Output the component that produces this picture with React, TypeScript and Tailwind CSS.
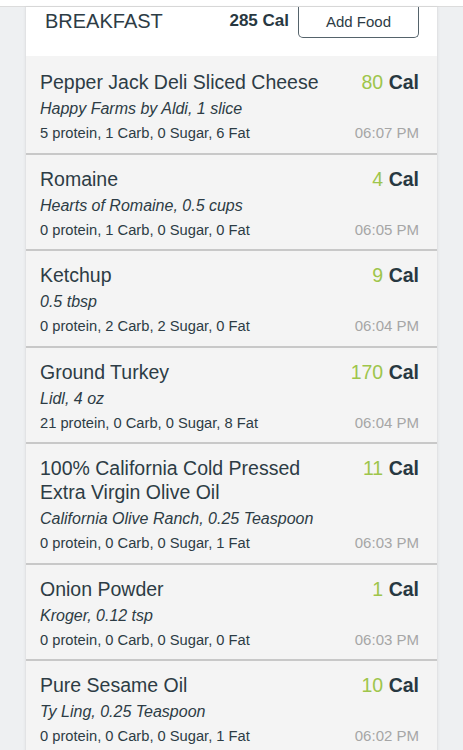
import React from "react";

interface FoodEntry {
  name: string;
  cal: number;
  detail: string;
  macros: string;
  time: string;
}

const ENTRIES: FoodEntry[] = [
  { name: "Pepper Jack Deli Sliced Cheese", cal: 80, detail: "Happy Farms by Aldi, 1 slice", macros: "5 protein, 1 Carb, 0 Sugar, 6 Fat", time: "06:07 PM" },
  { name: "Romaine", cal: 4, detail: "Hearts of Romaine, 0.5 cups", macros: "0 protein, 1 Carb, 0 Sugar, 0 Fat", time: "06:05 PM" },
  { name: "Ketchup", cal: 9, detail: "0.5 tbsp", macros: "0 protein, 2 Carb, 2 Sugar, 0 Fat", time: "06:04 PM" },
  { name: "Ground Turkey", cal: 170, detail: "Lidl, 4 oz", macros: "21 protein, 0 Carb, 0 Sugar, 8 Fat", time: "06:04 PM" },
  { name: "100% California Cold Pressed Extra Virgin Olive Oil", cal: 11, detail: "California Olive Ranch, 0.25 Teaspoon", macros: "0 protein, 0 Carb, 0 Sugar, 1 Fat", time: "06:03 PM" },
  { name: "Onion Powder", cal: 1, detail: "Kroger, 0.12 tsp", macros: "0 protein, 0 Carb, 0 Sugar, 0 Fat", time: "06:03 PM" },
  { name: "Pure Sesame Oil", cal: 10, detail: "Ty Ling, 0.25 Teaspoon", macros: "0 protein, 0 Carb, 0 Sugar, 1 Fat", time: "06:02 PM" },
];

function EntryRow({ entry, first }: { entry: FoodEntry; first: boolean }) {
  return (
    <div
      className={`border-t-2 pl-[14px] pr-[18px] pt-3 pb-[9.5px] ${first ? "border-[#f4f4f4]" : "border-[#c8c8c8]"}`}
    >
      <div className="flex items-start gap-4">
        <div className="flex-1 text-[19.5px] leading-[24px] text-[#2d3c45]">{entry.name}</div>
        <div className="whitespace-nowrap text-[19.5px] leading-[24px]">
          <span className="text-[#9ec54b]">{entry.cal}</span>{" "}
          <span className="font-bold text-[#283841]">Cal</span>
        </div>
      </div>
      <div className="mt-[5px] text-[16px] italic leading-[20px] text-[#2d3c45]">{entry.detail}</div>
      <div className="mt-[4px] flex items-center justify-between leading-[20px]">
        <span className="text-[14.7px] text-[#2d3c45]">{entry.macros}</span>
        <span className="text-[15px] text-[#a6a6a6]">{entry.time}</span>
      </div>
    </div>
  );
}

export default function App() {
  return (
    <div
      className="h-[750px] w-[463px] overflow-hidden bg-[#eef0f2]"
      style={{ fontFamily: '"Liberation Sans", Arial, sans-serif' }}
    >
      {/* status strip */}
      <div className="h-[7px] border-b border-[#dcdcdc] bg-white" />

      <div className="mx-[25px] border-x border-[#e2e3e5] bg-[#f4f4f4] shadow-[0_0_3px_rgba(0,0,0,0.06)]">
        {/* Meal header */}
        <div className="flex h-[49px] items-start bg-white pl-[19px] pr-[18px]">
          <span className="mt-[1px] flex-1 text-[20px] leading-[26px] text-[#2d3c45]">BREAKFAST</span>
          <span className="mt-[1px] mr-[9px] text-[17px] font-bold leading-[26px] text-[#283841]">285 Cal</span>
          <button className="h-[31px] w-[121px] rounded-b-[5px] border-[1.5px] border-t-0 border-[#55636b] pt-[1px] text-[15px] text-[#2d3c45]">
            Add Food
          </button>
        </div>

        {ENTRIES.map((e, i) => (
          <EntryRow key={e.name} entry={e} first={i === 0} />
        ))}
      </div>
    </div>
  );
}
